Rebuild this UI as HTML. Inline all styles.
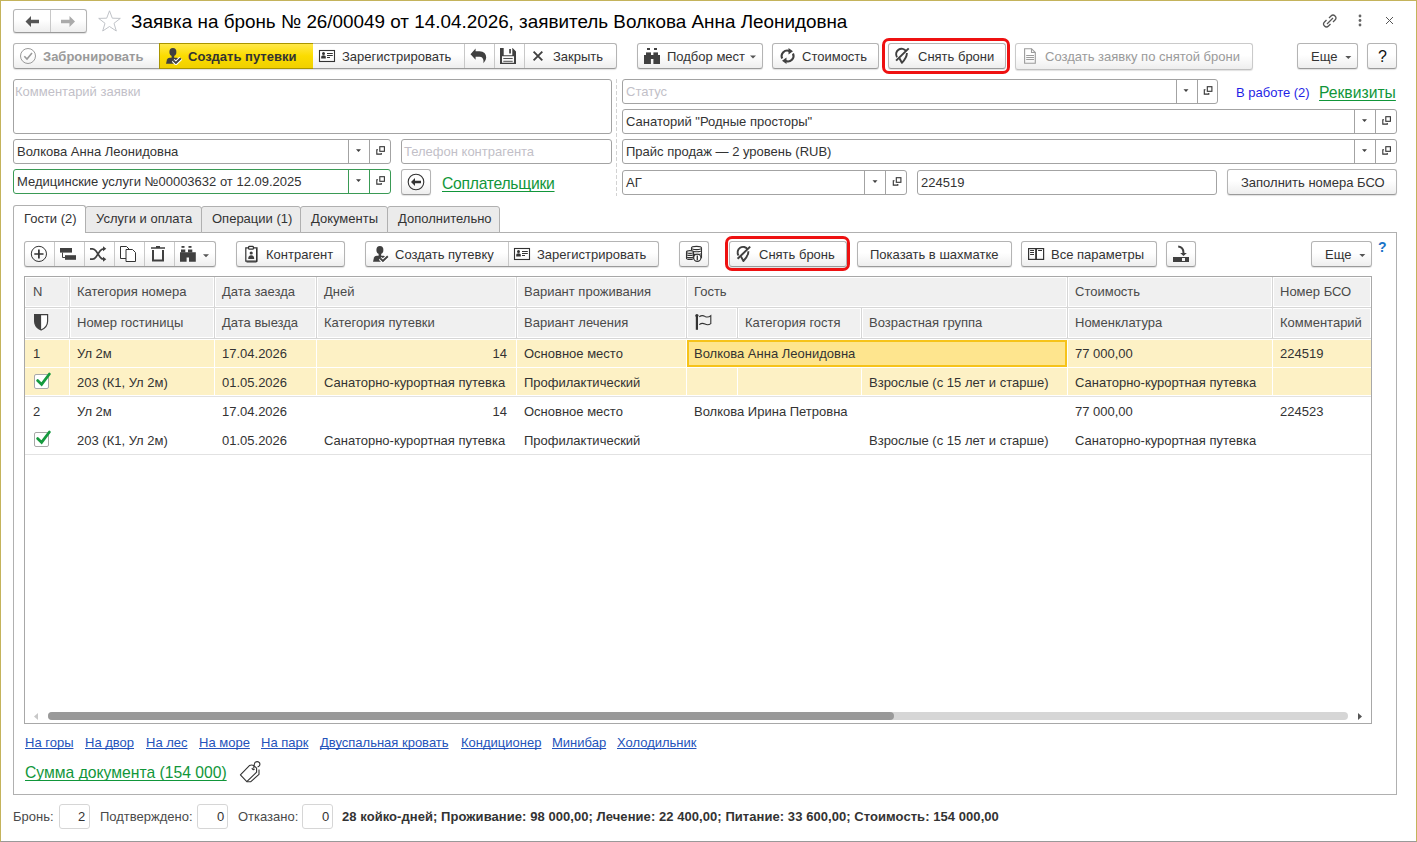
<!DOCTYPE html>
<html><head><meta charset="utf-8">
<style>
*{box-sizing:border-box;margin:0;padding:0}
html,body{width:1417px;height:842px;overflow:hidden;background:#fff}
body{position:relative;font-family:"Liberation Sans",sans-serif;font-size:13px;color:#333}
.a{position:absolute}
.t{position:absolute;white-space:nowrap;line-height:16px;height:16px}
.win{left:0;top:0;width:1417px;height:842px;border:1px solid #c4b35b;border-bottom:1px solid #999}
.btn{position:absolute;border:1px solid #b4b4b4;border-bottom-color:#9a9a9a;border-radius:3px;background:linear-gradient(#fff 0%,#fff 45%,#eeeeee 100%);box-shadow:0 1px 1px rgba(0,0,0,.12)}
.btxt{position:absolute;white-space:nowrap;line-height:16px;color:#333}
.div{position:absolute;width:1px;background:#c8c8c8}
.fld{position:absolute;border:1px solid #a3a3a3;border-radius:3px;background:#fff}
.fdiv{position:absolute;top:0;bottom:0;width:1px;background:#a3a3a3}
.ph{color:#c2bfc8}
.tab{position:absolute;border:1px solid #b0b0b0;border-bottom:none;border-radius:3px 3px 0 0;background:#ebebeb}
.lnk{color:#2453bb;text-decoration:underline;text-decoration-skip-ink:none}
.gl{color:#11963a;text-decoration:underline;text-underline-offset:2px;text-decoration-thickness:1px;text-decoration-skip-ink:none}
svg{position:absolute;overflow:visible}
</style></head><body>
<div class="a win"></div>

<!-- title bar -->
<div class="btn" style="left:13px;top:9px;width:74px;height:24px"></div>
<div class="div" style="left:50px;top:10px;height:22px"></div>
<svg style="left:0;top:0" width="1417" height="40">
  <path d="M25.5 21.5 L31 16 V19.7 H39 V23.3 H31 V27 Z" fill="#555"/>
  <path d="M75 21.5 L69.5 16 V19.7 H61 V23.3 H69.5 V27 Z" fill="#aaa"/>
  <path d="M109.5 10.8 L112.3 18.2 L120.3 18.4 L114 23.3 L116.3 31 L109.5 26.5 L102.7 31 L105 23.3 L98.7 18.4 L106.7 18.2 Z" fill="none" stroke="#b9bcc2" stroke-width="0.9"/>
</svg>
<div class="t" style="left:131px;top:11px;font-size:18.88px;line-height:22px;height:22px;color:#000">Заявка на бронь № 26/00049 от 14.04.2026, заявитель Волкова Анна Леонидовна</div>

<!-- top toolbar -->
<div class="btn" style="left:13px;top:43px;width:604px;height:26px"></div>
<div class="div" style="left:464px;top:44px;height:24px"></div>
<div class="div" style="left:494px;top:44px;height:24px"></div>
<div class="div" style="left:524px;top:44px;height:24px"></div>
<div class="a" style="left:159px;top:43px;width:154px;height:26px;border:1px solid #a99500;border-right:none;background:linear-gradient(#ffe84a,#fbdc00 50%,#f0d000)"></div>
<div class="btxt" style="left:43px;top:49px;font-weight:bold;color:#9a9a9a">Забронировать</div>
<div class="btxt" style="left:188px;top:49px;font-weight:bold;color:#333">Создать путевки</div>
<div class="btxt" style="left:342px;top:49px">Зарегистрировать</div>
<div class="btxt" style="left:553px;top:49px">Закрыть</div>

<div class="btn" style="left:637px;top:43px;width:126px;height:26px"></div>
<div class="btxt" style="left:667px;top:49px">Подбор мест</div>
<div class="btn" style="left:772px;top:43px;width:107px;height:26px"></div>
<div class="btxt" style="left:802px;top:49px">Стоимость</div>
<div class="a" style="left:882px;top:38px;width:128px;height:36px;border:3px solid #ee1111;border-radius:7px"></div>
<div class="btn" style="left:888px;top:43px;width:118px;height:26px"></div>
<div class="btxt" style="left:918px;top:49px">Снять брони</div>
<div class="btn" style="left:1015px;top:43px;width:238px;height:27px;border-color:#cacaca;border-bottom-color:#c0c0c0"></div>
<div class="btxt" style="left:1045px;top:49px;color:#9a9a9a">Создать заявку по снятой брони</div>
<div class="btn" style="left:1297px;top:43px;width:61px;height:26px"></div>
<div class="btxt" style="left:1311px;top:49px">Еще</div>
<div class="btn" style="left:1367px;top:43px;width:30px;height:26px"></div>
<div class="btxt" style="left:1378px;top:48px;font-size:16px;line-height:18px;color:#111">?</div>

<!-- fields -->
<div class="fld" style="left:13px;top:79px;width:599px;height:55px"></div>
<div class="t ph" style="left:15px;top:84px">Комментарий заявки</div>

<div class="fld" style="left:13px;top:139px;width:378px;height:25px"><div class="fdiv" style="left:334px"></div><div class="fdiv" style="left:355px"></div></div>
<div class="t" style="left:17px;top:144px">Волкова Анна Леонидовна</div>
<div class="fld" style="left:401px;top:139px;width:211px;height:25px"></div>
<div class="t ph" style="left:404px;top:144px">Телефон контрагента</div>

<div class="fld" style="left:13px;top:169px;width:378px;height:25px;border-color:#3a9a55"><div class="fdiv" style="left:334px;background:#3a9a55"></div><div class="fdiv" style="left:355px;background:#3a9a55"></div></div>
<div class="t" style="left:17px;top:174px">Медицинские услуги №00003632 от 12.09.2025</div>
<div class="btn" style="left:401px;top:169px;width:30px;height:26px"></div>
<div class="t gl" style="left:442px;top:175px;letter-spacing:-0.26px;font-size:15.7px;line-height:18px;height:20px">Соплательщики</div>

<div class="a" style="left:616px;top:79px;width:1px;height:117px;background:repeating-linear-gradient(#d2d2d2 0 4px,transparent 4px 6px)"></div>

<div class="fld" style="left:622px;top:79px;width:596px;height:25px"><div class="fdiv" style="left:553px"></div><div class="fdiv" style="left:574px"></div></div>
<div class="t ph" style="left:626px;top:84px">Статус</div>
<div class="t" style="left:1236px;top:85px;color:#1f1fe6">В работе (2)</div>
<div class="t gl" style="left:1319px;top:84px;font-size:15.7px;line-height:18px;height:20px">Реквизиты</div>

<div class="fld" style="left:622px;top:109px;width:775px;height:25px"><div class="fdiv" style="left:731px"></div><div class="fdiv" style="left:752px"></div></div>
<div class="t" style="left:626px;top:114px">Санаторий "Родные просторы"</div>
<div class="fld" style="left:622px;top:139px;width:775px;height:25px"><div class="fdiv" style="left:731px"></div><div class="fdiv" style="left:752px"></div></div>
<div class="t" style="left:626px;top:144px">Прайс продаж — 2 уровень (RUB)</div>
<div class="fld" style="left:622px;top:170px;width:285px;height:25px"><div class="fdiv" style="left:241px"></div><div class="fdiv" style="left:262px"></div></div>
<div class="t" style="left:626px;top:175px">АГ</div>
<div class="fld" style="left:917px;top:170px;width:300px;height:25px"></div>
<div class="t" style="left:921px;top:175px">224519</div>
<div class="btn" style="left:1227px;top:169px;width:170px;height:26px"></div>
<div class="btxt" style="left:1241px;top:175px">Заполнить номера БСО</div>

<!-- tabs -->
<div class="a" style="left:13px;top:232px;width:1384px;height:563px;border:1px solid #b0b0b0"></div>
<div class="tab" style="left:85px;top:206px;width:117px;height:27px;border-bottom:1px solid #b0b0b0"></div>
<div class="tab" style="left:201px;top:206px;width:100px;height:27px;border-bottom:1px solid #b0b0b0"></div>
<div class="tab" style="left:300px;top:206px;width:88px;height:27px;border-bottom:1px solid #b0b0b0"></div>
<div class="tab" style="left:387px;top:206px;width:113px;height:27px;border-bottom:1px solid #b0b0b0"></div>
<div class="tab" style="left:13px;top:205px;width:73px;height:28px;background:#fff"></div>
<div class="t" style="left:24px;top:211px">Гости (2)</div>
<div class="t" style="left:96px;top:211px">Услуги и оплата</div>
<div class="t" style="left:212px;top:211px">Операции (1)</div>
<div class="t" style="left:311px;top:211px">Документы</div>
<div class="t" style="left:398px;top:211px">Дополнительно</div>

<!-- table toolbar -->
<div class="btn" style="left:24px;top:241px;width:192px;height:26px"></div>
<div class="div" style="left:54px;top:242px;height:24px"></div>
<div class="div" style="left:84px;top:242px;height:24px"></div>
<div class="div" style="left:114px;top:242px;height:24px"></div>
<div class="div" style="left:144px;top:242px;height:24px"></div>
<div class="div" style="left:174px;top:242px;height:24px"></div>
<div class="btn" style="left:236px;top:241px;width:109px;height:26px"></div>
<div class="btxt" style="left:266px;top:247px">Контрагент</div>
<div class="btn" style="left:365px;top:241px;width:294px;height:26px"></div>
<div class="div" style="left:508px;top:242px;height:24px"></div>
<div class="btxt" style="left:395px;top:247px">Создать путевку</div>
<div class="btxt" style="left:537px;top:247px">Зарегистрировать</div>
<div class="btn" style="left:679px;top:241px;width:30px;height:26px"></div>
<div class="a" style="left:725px;top:236px;width:125px;height:35px;border:3px solid #ee1111;border-radius:7px"></div>
<div class="btn" style="left:729px;top:241px;width:118px;height:26px"></div>
<div class="btxt" style="left:759px;top:247px">Снять бронь</div>
<div class="btn" style="left:857px;top:241px;width:155px;height:26px"></div>
<div class="btxt" style="left:870px;top:247px">Показать в шахматке</div>
<div class="btn" style="left:1021px;top:241px;width:136px;height:26px"></div>
<div class="btxt" style="left:1051px;top:247px">Все параметры</div>
<div class="btn" style="left:1166px;top:241px;width:30px;height:26px"></div>
<div class="btn" style="left:1311px;top:241px;width:61px;height:26px"></div>
<div class="btxt" style="left:1325px;top:247px">Еще</div>
<div class="t" style="left:1378px;top:239px;font-size:14px;font-weight:bold;color:#1a74c8">?</div>

<!-- table -->
<div class="a" style="left:24px;top:276px;width:1348px;height:448px;border:1px solid #a8a8a8"></div>
<div class="a" style="left:25px;top:277px;width:1346px;height:62px;background:#d6d6d6"></div>
<div class="a" style="left:25px;top:277px;width:44px;height:30px;background:#f0f0f0;border:1px solid #fff"></div>
<div class="a" style="left:70px;top:277px;width:144px;height:30px;background:#f0f0f0;border:1px solid #fff"></div>
<div class="a" style="left:215px;top:277px;width:101px;height:30px;background:#f0f0f0;border:1px solid #fff"></div>
<div class="a" style="left:317px;top:277px;width:199px;height:30px;background:#f0f0f0;border:1px solid #fff"></div>
<div class="a" style="left:517px;top:277px;width:169px;height:30px;background:#f0f0f0;border:1px solid #fff"></div>
<div class="a" style="left:687px;top:277px;width:380px;height:30px;background:#f0f0f0;border:1px solid #fff"></div>
<div class="a" style="left:1068px;top:277px;width:204px;height:30px;background:#f0f0f0;border:1px solid #fff"></div>
<div class="a" style="left:1273px;top:277px;width:98px;height:30px;background:#f0f0f0;border:1px solid #fff"></div>
<div class="a" style="left:25px;top:308px;width:44px;height:30px;background:#f0f0f0;border:1px solid #fff"></div>
<div class="a" style="left:70px;top:308px;width:144px;height:30px;background:#f0f0f0;border:1px solid #fff"></div>
<div class="a" style="left:215px;top:308px;width:101px;height:30px;background:#f0f0f0;border:1px solid #fff"></div>
<div class="a" style="left:317px;top:308px;width:199px;height:30px;background:#f0f0f0;border:1px solid #fff"></div>
<div class="a" style="left:517px;top:308px;width:169px;height:30px;background:#f0f0f0;border:1px solid #fff"></div>
<div class="a" style="left:687px;top:308px;width:50px;height:30px;background:#f0f0f0;border:1px solid #fff"></div>
<div class="a" style="left:738px;top:308px;width:123px;height:30px;background:#f0f0f0;border:1px solid #fff"></div>
<div class="a" style="left:862px;top:308px;width:205px;height:30px;background:#f0f0f0;border:1px solid #fff"></div>
<div class="a" style="left:1068px;top:308px;width:204px;height:30px;background:#f0f0f0;border:1px solid #fff"></div>
<div class="a" style="left:1273px;top:308px;width:98px;height:30px;background:#f0f0f0;border:1px solid #fff"></div>
<div class="a" style="left:25px;top:339px;width:1346px;height:57px;background:#fdf1c5"></div>
<div class="a" style="left:69px;top:339px;width:1px;height:57px;background:#fff"></div>
<div class="a" style="left:214px;top:339px;width:1px;height:57px;background:#fff"></div>
<div class="a" style="left:316px;top:339px;width:1px;height:57px;background:#fff"></div>
<div class="a" style="left:516px;top:339px;width:1px;height:57px;background:#fff"></div>
<div class="a" style="left:686px;top:339px;width:1px;height:57px;background:#fff"></div>
<div class="a" style="left:1067px;top:339px;width:1px;height:57px;background:#fff"></div>
<div class="a" style="left:1272px;top:339px;width:1px;height:57px;background:#fff"></div>
<div class="a" style="left:737px;top:368px;width:1px;height:28px;background:#fff"></div>
<div class="a" style="left:861px;top:368px;width:1px;height:28px;background:#fff"></div>
<div class="a" style="left:25px;top:367px;width:1346px;height:1px;background:#fff"></div>
<div class="a" style="left:25px;top:339px;width:1346px;height:1px;background:#fff"></div>
<div class="a" style="left:25px;top:395px;width:1346px;height:1px;background:#fff"></div>
<div class="a" style="left:25px;top:396px;width:1346px;height:1px;background:#e2e2e2"></div>
<div class="a" style="left:25px;top:454px;width:1346px;height:1px;background:#e2e2e2"></div>
<div class="a" style="left:687px;top:340px;width:380px;height:27px;background:#fee58e;border:2px solid #f6c31a"></div>
<div class="t" style="left:33px;top:284px;color:#4a4a4a">N</div>
<div class="t" style="left:77px;top:284px;color:#4a4a4a">Категория номера</div>
<div class="t" style="left:222px;top:284px;color:#4a4a4a">Дата заезда</div>
<div class="t" style="left:324px;top:284px;color:#4a4a4a">Дней</div>
<div class="t" style="left:524px;top:284px;color:#4a4a4a">Вариант проживания</div>
<div class="t" style="left:694px;top:284px;color:#4a4a4a">Гость</div>
<div class="t" style="left:1075px;top:284px;color:#4a4a4a">Стоимость</div>
<div class="t" style="left:1280px;top:284px;color:#4a4a4a">Номер БСО</div>
<div class="t" style="left:77px;top:315px;color:#4a4a4a">Номер гостиницы</div>
<div class="t" style="left:222px;top:315px;color:#4a4a4a">Дата выезда</div>
<div class="t" style="left:324px;top:315px;color:#4a4a4a">Категория путевки</div>
<div class="t" style="left:524px;top:315px;color:#4a4a4a">Вариант лечения</div>
<div class="t" style="left:745px;top:315px;color:#4a4a4a">Категория гостя</div>
<div class="t" style="left:869px;top:315px;color:#4a4a4a">Возрастная группа</div>
<div class="t" style="left:1075px;top:315px;color:#4a4a4a">Номенклатура</div>
<div class="t" style="left:1280px;top:315px;color:#4a4a4a">Комментарий</div>
<div class="t" style="left:33px;top:346px;">1</div>
<div class="t" style="left:77px;top:346px;">Ул 2м</div>
<div class="t" style="left:222px;top:346px;">17.04.2026</div>
<div class="t" style="left:316px;width:191px;text-align:right;top:346px">14</div>
<div class="t" style="left:524px;top:346px;">Основное место</div>
<div class="t" style="left:694px;top:346px;">Волкова Анна Леонидовна</div>
<div class="t" style="left:1075px;top:346px;">77 000,00</div>
<div class="t" style="left:1280px;top:346px;">224519</div>
<div class="t" style="left:77px;top:375px;">203 (К1, Ул 2м)</div>
<div class="t" style="left:222px;top:375px;">01.05.2026</div>
<div class="t" style="left:324px;top:375px;">Санаторно-курортная путевка</div>
<div class="t" style="left:524px;top:375px;">Профилактический</div>
<div class="t" style="left:869px;top:375px;">Взрослые (с 15 лет и старше)</div>
<div class="t" style="left:1075px;top:375px;">Санаторно-курортная путевка</div>
<div class="t" style="left:33px;top:404px;">2</div>
<div class="t" style="left:77px;top:404px;">Ул 2м</div>
<div class="t" style="left:222px;top:404px;">17.04.2026</div>
<div class="t" style="left:316px;width:191px;text-align:right;top:404px">14</div>
<div class="t" style="left:524px;top:404px;">Основное место</div>
<div class="t" style="left:694px;top:404px;">Волкова Ирина Петровна</div>
<div class="t" style="left:1075px;top:404px;">77 000,00</div>
<div class="t" style="left:1280px;top:404px;">224523</div>
<div class="t" style="left:77px;top:433px;">203 (К1, Ул 2м)</div>
<div class="t" style="left:222px;top:433px;">01.05.2026</div>
<div class="t" style="left:324px;top:433px;">Санаторно-курортная путевка</div>
<div class="t" style="left:524px;top:433px;">Профилактический</div>
<div class="t" style="left:869px;top:433px;">Взрослые (с 15 лет и старше)</div>
<div class="t" style="left:1075px;top:433px;">Санаторно-курортная путевка</div>
<div class="a" style="left:34px;top:374px;width:15px;height:15px;border:1px solid #a8a8a8;border-radius:2px;background:#fff"></div>
<div class="a" style="left:34px;top:432px;width:15px;height:15px;border:1px solid #a8a8a8;border-radius:2px;background:#fff"></div>
<svg style="left:0;top:0" width="1417" height="460">
  <path d="M37.6 380.6 L41.6 384.4 L49.4 374" fill="none" stroke="#169a3e" stroke-width="2.8" stroke-linecap="round"/>
  <path d="M37.6 438.6 L41.6 442.4 L49.4 432" fill="none" stroke="#169a3e" stroke-width="2.8" stroke-linecap="round"/>
  <path d="M34.6 314.6 H47.6 V321.2 Q47.6 327 41.1 330 Q34.6 327 34.6 321.2 Z" fill="#fff" stroke="#404040" stroke-width="1.2"/>
  <path d="M34.6 314.6 H41.1 V330 Q34.6 327 34.6 321.2 Z" fill="#404040"/>
  <path d="M696.9 316 V329.8" stroke="#333" stroke-width="2.2"/>
  <circle cx="696.9" cy="315.6" r="1.6" fill="#333"/>
  <path d="M699.3 316.8 Q702 314.6 705 316.4 Q708 318 710.8 315.6 V323.6 Q708 325.6 705 324 Q702 322.4 699.3 324.6" fill="none" stroke="#333" stroke-width="1.1"/>
</svg>
<div class="a" style="left:48px;top:712px;width:1300px;height:8px;border-radius:4px;background:#d6d6d6"></div>
<div class="a" style="left:48px;top:712px;width:846px;height:8px;border-radius:4px;background:#999"></div>
<svg style="left:0;top:0" width="1417" height="730">
  <path d="M38 713 L34 716.5 L38 720 Z" fill="#c8c8c8"/>
  <path d="M1358 713 L1362 716.5 L1358 720 Z" fill="#555"/>
</svg>

<!-- links -->
<div class="t lnk" style="left:25px;top:735px">На горы</div>
<div class="t lnk" style="left:85px;top:735px">На двор</div>
<div class="t lnk" style="left:146px;top:735px">На лес</div>
<div class="t lnk" style="left:199px;top:735px">На море</div>
<div class="t lnk" style="left:261px;top:735px">На парк</div>
<div class="t lnk" style="left:320px;top:735px">Двуспальная кровать</div>
<div class="t lnk" style="left:461px;top:735px">Кондиционер</div>
<div class="t lnk" style="left:552px;top:735px">Минибар</div>
<div class="t lnk" style="left:617px;top:735px">Холодильник</div>
<div class="t gl" style="left:25px;top:764px;font-size:15.7px;line-height:18px;height:20px">Сумма документа (154 000)</div>

<!-- footer -->
<div class="t" style="left:13px;top:809px;color:#4a4a4a">Бронь:</div>
<div class="a" style="left:59px;top:804px;width:31px;height:25px;border:1px solid #d6d6d6;border-radius:3px"></div>
<div class="t" style="left:78px;top:809px">2</div>
<div class="t" style="left:100px;top:809px;color:#4a4a4a">Подтверждено:</div>
<div class="a" style="left:197px;top:804px;width:31px;height:25px;border:1px solid #d6d6d6;border-radius:3px"></div>
<div class="t" style="left:217px;top:809px">0</div>
<div class="t" style="left:238px;top:809px;color:#4a4a4a">Отказано:</div>
<div class="a" style="left:302px;top:804px;width:31px;height:25px;border:1px solid #d6d6d6;border-radius:3px"></div>
<div class="t" style="left:322px;top:809px">0</div>
<div class="t" style="left:342px;top:809px;font-weight:bold;color:#333;letter-spacing:0.06px">28 койко-дней; Проживание: 98 000,00; Лечение: 22 400,00; Питание: 33 600,00; Стоимость: 154 000,00</div>

<!-- ICONS -->
<svg style="left:0;top:0" width="1417" height="842" id="icons">
<defs>
  <g id="person">
    <ellipse cx="6.9" cy="4" rx="3.5" ry="4.1" fill="#404040"/>
    <rect x="5.6" y="7" width="2.6" height="3" fill="#404040"/>
    <path d="M0 15.8 L1 11.6 Q1.6 10 3.6 9.8 L10.6 9.8 Q12.6 10 13.2 11.2 L7.5 15.8 Z" fill="#404040"/>
    <path d="M7.2 12.4 L9.9 15 L14.8 10.2" fill="none" stroke="#fff" stroke-width="4" stroke-linejoin="round"/>
    <path d="M7.2 12.4 L9.9 15 L14.8 10.2" fill="none" stroke="#404040" stroke-width="1.9"/>
  </g>
  <g id="card">
    <rect x="0.5" y="0.5" width="15" height="11" fill="none" stroke="#333" stroke-width="1.1"/>
    <circle cx="4.5" cy="3.6" r="1.5" fill="#333"/>
    <path d="M2.2 8.6 V6.8 Q2.2 5.2 4.5 5.2 Q6.8 5.2 6.8 6.8 V8.6 Z" fill="#333"/>
    <path d="M8 3.5 H13.8 M8 5.5 H13.8 M8 7.5 H11" stroke="#333" stroke-width="1"/>
  </g>
  <g id="pin">
    <path d="M1.5 9.4 A5 5 0 1 1 10.7 3.4" fill="none" stroke="#404040" stroke-width="1.9"/>
    <path d="M11.4 5.2 Q11.4 9.8 6.4 15 L3.9 10.4" fill="none" stroke="#404040" stroke-width="1.9" stroke-linejoin="round"/>
    <path d="M0.6 12.8 L13.2 0.6" stroke="#404040" stroke-width="2"/>
  </g>
  <g id="dd"><path d="M0 0 H5 L2.5 2.6 Z" fill="#404040"/></g>
  <g id="bd"><path d="M0 0 H6 L3 3 Z" fill="#555"/></g>
  <g id="op"><path d="M2 3.8 H0.8 V8.1 H5.3 V7" fill="none" stroke="#333" stroke-width="1.1"/><rect x="3.8" y="0.7" width="4.6" height="4.6" fill="none" stroke="#333" stroke-width="1.1"/></g>
</defs>
<!-- top toolbar -->
<circle cx="28" cy="56" r="7.5" fill="none" stroke="#9a9a9a" stroke-width="1"/>
<path d="M24.3 56.2 L27 59 L32 53" fill="none" stroke="#9a9a9a" stroke-width="1.6"/>
<use href="#person" x="166" y="48"/>
<use href="#card" x="319" y="50"/>
<path d="M470.5 54.2 L475.6 48.4 V51.2 H479.5 Q486.2 51.5 486.2 57.5 Q486.2 60.5 483.5 63.3 Q484 59.8 482.5 58 Q481.5 56.7 479.5 56.7 H475.6 V59.8 Z" fill="#404040"/>
<path d="M500 48 H512.6 L516 51.4 V64 H500 Z M503.7 48 V55.2 H512.3 V48 Z M502 56.3 V62.8 H514 V56.3 Z" fill="#404040" fill-rule="evenodd"/>
<rect x="509.2" y="49" width="1.7" height="4.5" fill="#404040"/>
<path d="M503.3 58.5 H512.7 M503.3 61.3 H512.7" stroke="#404040" stroke-width="0.9"/>
<path d="M533.6 51.6 L542.3 60.3 M542.3 51.6 L533.6 60.3" stroke="#404040" stroke-width="1.9"/>
<g fill="#404040">
  <rect x="647" y="48" width="3" height="2"/><rect x="654" y="48" width="3" height="2"/>
  <rect x="646" y="52.4" width="5" height="3"/><rect x="653.4" y="52.4" width="4.6" height="3"/>
  <path d="M644 55 H660 V64 H653.4 V59 H650.9 V64 H644 Z"/>
</g>
<use href="#bd" x="750" y="55.5"/>
<g fill="none" stroke="#404040" stroke-width="2.1">
  <path d="M782.2 58.5 A5.6 5.6 0 0 1 789.5 51"/>
  <path d="M793 53.5 A5.6 5.6 0 0 1 785.8 61"/>
</g>
<path d="M788.5 48 L793 51.3 L788.5 54.5 Z M786.5 57.5 L782 60.8 L786.5 64 Z" fill="#404040"/>
<use href="#pin" x="895.5" y="47.8"/>
<g fill="none" stroke="#9c9c9c" stroke-width="1.1">
  <path d="M1024.6 48.7 H1031.5 L1035.3 52.5 V63.3 H1024.6 Z"/>
  <path d="M1031.5 48.7 V52.5 H1035.3"/>
</g>
<path d="M1026.2 55.5 H1034 M1026.2 57.5 H1034 M1026.2 59.5 H1034" stroke="#9c9c9c" stroke-width="1"/>
<use href="#bd" x="1345.3" y="56"/>
<g fill="none" stroke="#555" stroke-width="1.3">
  <path d="M1326.5 20 L1324.5 22 Q1322.5 24 1324.5 26 Q1326.5 28 1328.5 26 L1330.5 24"/>
  <path d="M1329 18 L1331 16 Q1333 14 1335 16 Q1337 18 1335 20 L1333 22"/>
  <path d="M1327 24 L1333 18"/>
</g>
<g fill="#666"><circle cx="1360" cy="16" r="1.4"/><circle cx="1360" cy="20.5" r="1.4"/><circle cx="1360" cy="25" r="1.4"/></g>
<path d="M1386 17 L1393 24 M1393 17 L1386 24" stroke="#555" stroke-width="1"/>
<!-- table toolbar -->
<circle cx="38.9" cy="253.9" r="7.6" fill="none" stroke="#333" stroke-width="1"/>
<path d="M34.3 254 H43.5 M38.9 249.4 V258.6" stroke="#333" stroke-width="1.7"/>
<rect x="60" y="248" width="12" height="4.6" fill="#404040"/>
<rect x="65" y="255.2" width="11" height="4.6" fill="#404040"/>
<path d="M62.5 252.5 V257.5 H65" fill="none" stroke="#404040" stroke-width="1"/>
<g fill="none" stroke="#404040" stroke-width="1.7">
  <path d="M90 248.8 H92.5 Q94.5 248.8 96 251 L100 257 Q101.5 259.2 103.5 259.2 H104"/>
  <path d="M90 259.2 H92.5 Q94.5 259.2 96 257 L100 251 Q101.5 248.8 103.5 248.8 H104"/>
</g>
<path d="M103 246.3 L106.3 248.8 L103 251.3 Z M103 256.7 L106.3 259.2 L103 261.7 Z" fill="#404040"/>
<g fill="#fff" stroke="#333" stroke-width="1">
  <path d="M120.5 246.5 H126.5 L129.5 249.5 V258.5 H120.5 Z"/>
  <path d="M126 249.5 H132.5 L135.5 252.5 V261.5 H126 Z"/>
</g>
<path d="M151 248 H165 M156 246.8 H160" stroke="#404040" stroke-width="1.6"/>
<path d="M153 250 V260.5 H163 V250" fill="none" stroke="#404040" stroke-width="2"/>
<g fill="#404040">
  <rect x="181.5" y="246" width="3" height="1.8"/><rect x="188.5" y="246" width="3" height="1.8"/>
  <rect x="181" y="249.5" width="4.3" height="3"/><rect x="188" y="249.5" width="4.3" height="3"/>
  <path d="M180 252.3 H195.8 V261.7 H189 V257.5 H186.6 V261.7 H180 Z"/>
</g>
<use href="#bd" x="203" y="254.2"/>
<g fill="none" stroke="#333" stroke-width="1.2">
  <path d="M248.2 247.8 H245.8 V261.2 H257 V247.8 H253.8"/>
  <rect x="248.6" y="246.4" width="4.8" height="2.8" rx="0.8"/>
</g>
<path d="M256.5 248.5 V262 H246.5" fill="none" stroke="#333" stroke-width="1"/>
<circle cx="251.2" cy="253" r="1.6" fill="#404040"/>
<path d="M248.2 259 Q248.2 255.3 251.2 255.3 Q254.2 255.3 254.2 259 Z" fill="#404040"/>
<use href="#person" x="373" y="246"/>
<use href="#card" x="514" y="248"/>
<g fill="#fff" stroke="#333" stroke-width="1.1">
  <path d="M691.5 248 V257.5 Q691.5 258.6 696.5 258.6 Q701.5 258.6 701.5 257.5 V248"/>
  <ellipse cx="696.5" cy="248" rx="5" ry="1.6"/>
  <path d="M691.5 250.6 Q691.5 251.8 696.5 251.8 Q701.5 251.8 701.5 250.6 M691.5 253.2 Q691.5 254.4 696.5 254.4 Q701.5 254.4 701.5 253.2" fill="none"/>
  <path d="M686.5 252 V258.2 Q686.5 259.4 690 259.4 Q693.5 259.4 693.5 258.2 V252"/>
  <ellipse cx="690" cy="252" rx="3.5" ry="1.4"/>
  <path d="M686.5 254.2 Q686.5 255.4 690 255.4 Q693.5 255.4 693.5 254.2 M686.5 256.4 Q686.5 257.6 690 257.6 Q693.5 257.6 693.5 256.4" fill="none"/>
  <circle cx="697.3" cy="257.8" r="3.6"/>
</g>
<path d="M697.3 255.6 V260.2" stroke="#333" stroke-width="1.3"/>
<use href="#pin" x="737" y="246"/>
<g fill="none" stroke="#333" stroke-width="1.2">
  <rect x="1028.6" y="248.6" width="15" height="10.8"/>
  <path d="M1036.1 248.6 V259.4"/>
</g>
<path d="M1036.1 248.6 V259.4" stroke="#333" stroke-width="1.6"/>
<path d="M1030.1 250.5 H1034 M1030.1 252.5 H1034 M1030.1 254.5 H1034 M1038.1 250.5 H1042" stroke="#333" stroke-width="1"/>
<path d="M1173 257 H1189 V262 H1173 Z M1182 258 V261 H1185 V258 Z" fill="#404040" fill-rule="evenodd"/>
<path d="M1178.2 246.4 Q1183.5 246.8 1183.5 253" fill="none" stroke="#404040" stroke-width="2"/>
<path d="M1180.2 253 H1186.8 L1183.5 256 Z" fill="#404040"/>
<use href="#bd" x="1359.3" y="254"/>
<!-- fields -->
<use href="#dd" x="356" y="149.3"/><use href="#op" x="376" y="146"/>
<use href="#dd" x="356" y="179.3"/><use href="#op" x="376" y="176"/>
<use href="#dd" x="1183.5" y="89.3"/><use href="#op" x="1203.5" y="86"/>
<use href="#dd" x="1362" y="119.3"/><use href="#op" x="1382" y="116"/>
<use href="#dd" x="1362" y="149.3"/><use href="#op" x="1382" y="146"/>
<use href="#dd" x="872.5" y="180.3"/><use href="#op" x="892.5" y="177"/>
<circle cx="416" cy="182" r="7.8" fill="none" stroke="#333" stroke-width="1.1"/>
<path d="M411 182 L415 178 V180.8 H421 V183.2 H415 V186 Z" fill="#333"/>
<!-- tag -->
<g fill="none" stroke="#333" stroke-width="1.1" stroke-linejoin="round">
  <path d="M240.4 774.8 L249.4 765.6 Q251.5 764.6 253.5 765.4 L256.6 768.2 V772.2 L246.8 781.6 Z"/>
  <path d="M259 769.5 V774.3 L250.6 781.8 H247"/>
  <path d="M252 767.8 Q252.5 770.4 254.6 769.2"/>
  <path d="M253.8 768.6 Q253.6 765.6 255 762.4 Q257.4 760.8 259.4 762.6 Q260.6 764.6 259 766.2 L257.6 767"/>
</g>
</svg>
</body></html>
